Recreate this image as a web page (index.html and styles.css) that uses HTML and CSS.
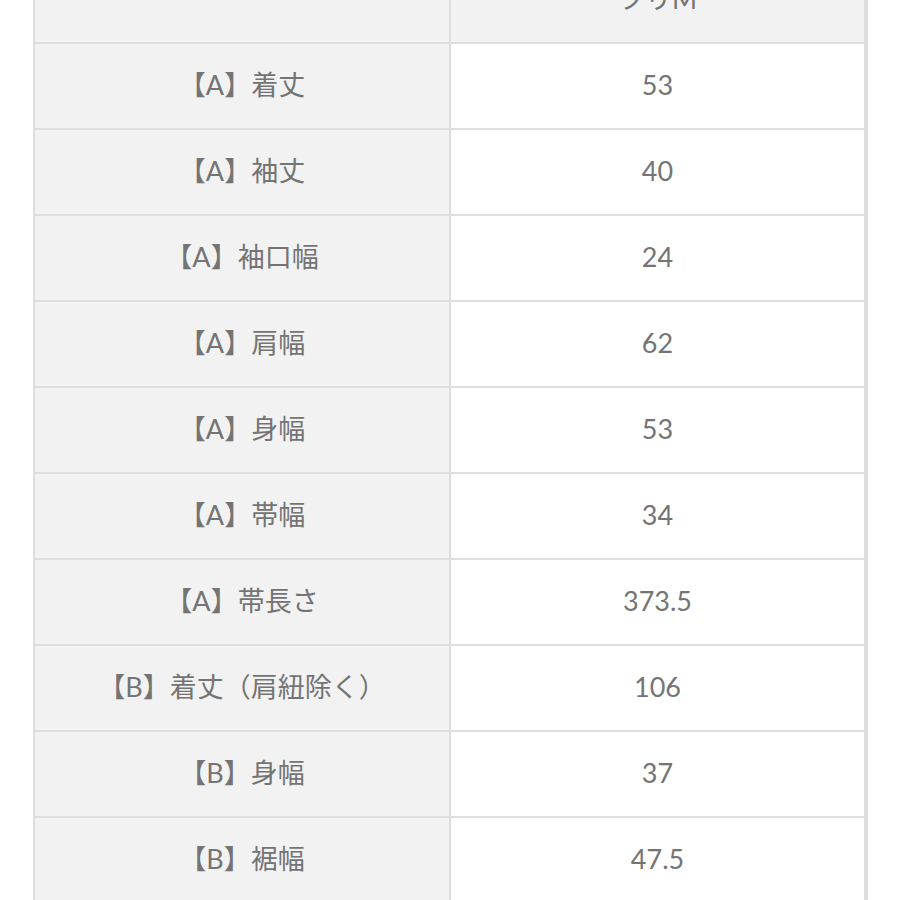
FILE: index.html
```html
<!DOCTYPE html>
<html lang="ja">
<head>
<meta charset="utf-8">
<link rel="stylesheet" href="styles.css">
</head>
<body>
<div class="size-table">
  <div class="cell head"></div><div class="cell head">フリM</div>
  <div class="cell label">【A】着丈</div><div class="cell value">53</div>
  <div class="cell label">【A】袖丈</div><div class="cell value">40</div>
  <div class="cell label">【A】袖口幅</div><div class="cell value">24</div>
  <div class="cell label">【A】肩幅</div><div class="cell value">62</div>
  <div class="cell label">【A】身幅</div><div class="cell value">53</div>
  <div class="cell label">【A】帯幅</div><div class="cell value">34</div>
  <div class="cell label">【A】帯長さ</div><div class="cell value">373.5</div>
  <div class="cell label">【B】着丈（肩紐除く）</div><div class="cell value">106</div>
  <div class="cell label">【B】身幅</div><div class="cell value">37</div>
  <div class="cell label">【B】裾幅</div><div class="cell value">47.5</div>
</div>
</body>
</html>
```
FILE: styles.css
```css
html, body {
  margin: 0;
  padding: 0;
  background: #ffffff;
  overflow: hidden;
}
body {
  height: 900px;
  font-family: Lato, "Noto Sans CJK JP", sans-serif;
  color: #747474;
}
.size-table {
  display: grid;
  grid-template-columns: 414px 413px;
  grid-auto-rows: 84px;
  gap: 2px;
  padding: 2px 2px 0 2px;
  width: 831px;
  margin: -44px 0 0 33px;
  background: #dedede;
}
.cell {
  display: flex;
  align-items: center;
  justify-content: center;
  padding-bottom: 3px;
  font-size: 27px;
  line-height: 1;
}
.head, .label {
  background: #f2f2f2;
}
.value {
  background: #ffffff;
}
```
